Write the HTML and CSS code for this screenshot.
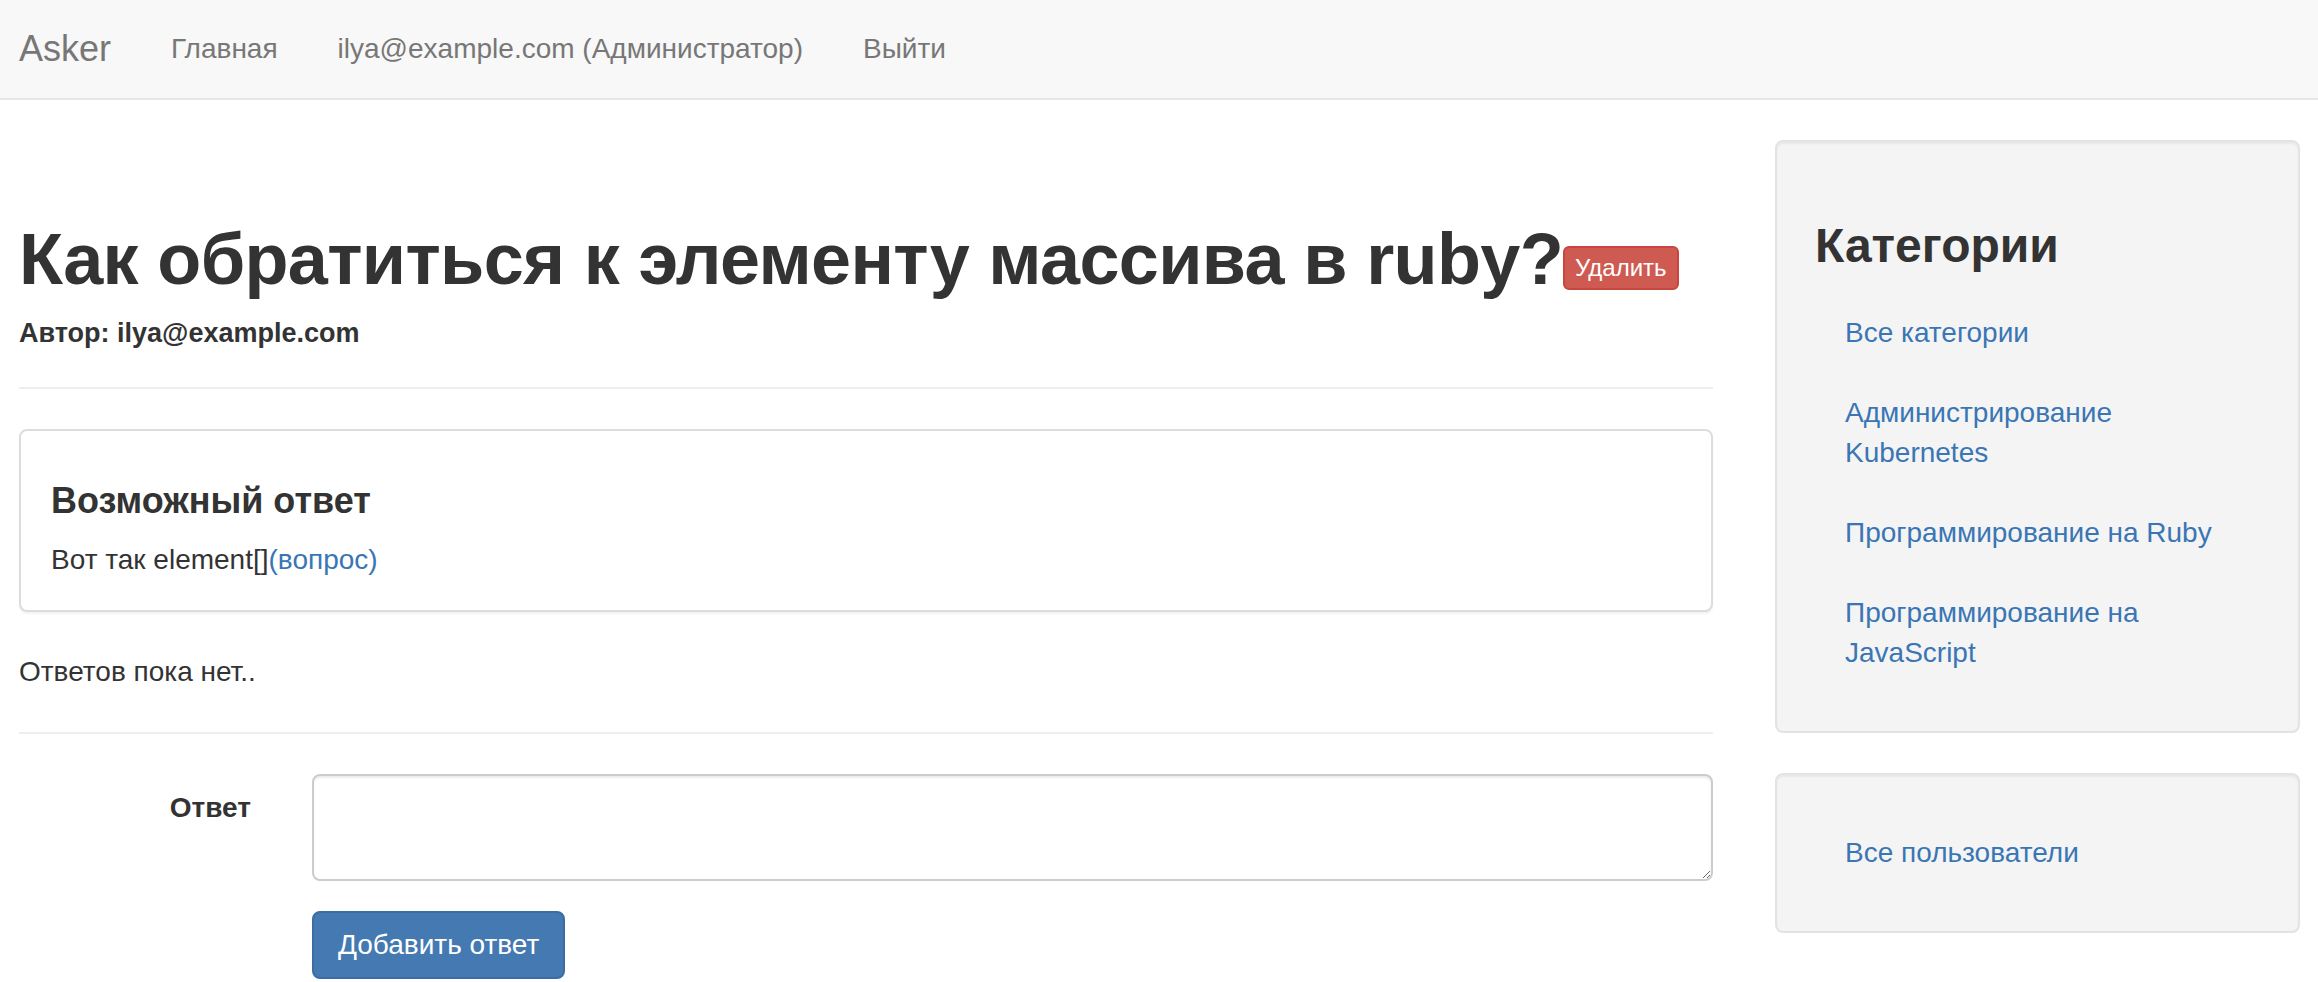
FILE: index.html
```html
<!DOCTYPE html>
<html lang="ru">
<head>
<meta charset="utf-8">
<title>Asker</title>
<link rel="stylesheet" href="styles.css">
</head>
<body>
<nav class="navbar">
  <a class="brand" href="#">Asker</a>
  <ul class="nav-links">
    <li><a href="#">Главная</a></li>
    <li><a href="#">ilya@example.com (Администратор)</a></li>
    <li><a href="#">Выйти</a></li>
  </ul>
</nav>
<div class="page">
  <main class="main">
    <div class="page-header">
      <h1 class="title">Как обратиться к элементу массива в ruby?<a class="btn-delete" href="#">Удалить</a></h1>
      <h5 class="author">Автор: ilya@example.com</h5>
    </div>
    <div class="panel">
      <div class="panel-body">
        <h4 class="panel-title">Возможный ответ</h4>
        <p class="panel-text">Вот так element[]<a href="#">(вопрос)</a></p>
      </div>
    </div>
    <p class="no-answers">Ответов пока нет..</p>
    <hr class="divider">
    <form class="answer-form">
      <label class="form-label" for="answer">Ответ</label>
      <textarea class="form-textarea" id="answer"></textarea>
      <div class="form-actions">
        <button type="button" class="btn-primary">Добавить ответ</button>
      </div>
    </form>
  </main>
  <aside class="sidebar">
    <div class="well">
      <h3 class="well-title">Категории</h3>
      <ul class="nav-stacked">
        <li><a href="#">Все категории</a></li>
        <li><a href="#">Администрирование Kubernetes</a></li>
        <li><a href="#">Программирование на Ruby</a></li>
        <li><a href="#">Программирование на JavaScript</a></li>
      </ul>
    </div>
    <div class="well">
      <ul class="nav-stacked">
        <li><a href="#">Все пользователи</a></li>
      </ul>
    </div>
  </aside>
</div>
</body>
</html>
```

FILE: styles.css
```css
* { box-sizing: border-box; }
html, body { margin: 0; padding: 0; }
body {
  font-family: "Liberation Sans", Helvetica, Arial, sans-serif;
  font-size: 28px;
  line-height: 40px;
  color: #333;
  background: #fff;
}
a { color: #3a76b4; text-decoration: none; }

.navbar {
  display: flex;
  align-items: center;
  height: 100px;
  padding-left: 19px;
  background: #f8f8f8;
  border-bottom: 2px solid #e7e7e7;
}
.brand {
  font-size: 36px;
  line-height: 40px;
  color: #777;
  margin-right: 30px;
}
.nav-links {
  display: flex;
  list-style: none;
  margin: 0;
  padding: 0;
}
.nav-links a {
  display: block;
  padding: 0 30px;
  color: #777;
  font-size: 28px;
  line-height: 40px;
}

.page {
  display: flex;
  gap: 62px;
  padding: 0 18px 0 19px;
  margin-top: 40px;
}
.main { flex: 1; min-width: 0; }
.sidebar { width: 525px; flex-shrink: 0; }

.page-header {
  margin: 80px 0 40px;
  padding-bottom: 18px;
  border-bottom: 2px solid #eee;
}
.title {
  font-size: 72px;
  line-height: 1.1;
  font-weight: 700;
  letter-spacing: -0.65px;
  margin: 0 0 20px;
}
.btn-delete {
  display: inline-block;
  vertical-align: 8px;
  margin-left: 0;
  padding: 2px 10px;
  font-size: 24px;
  line-height: 36px;
  font-weight: 400;
  letter-spacing: 0;
  color: #fff;
  background: #cf5a52;
  border: 2px solid #c9463f;
  border-radius: 6px;
}
.author {
  font-size: 27px;
  line-height: 1.1;
  font-weight: 700;
  margin: 0 0 20px;
}

.panel {
  margin-bottom: 40px;
  background: #fff;
  border: 2px solid #ddd;
  border-radius: 8px;
  box-shadow: 0 2px 2px rgba(0, 0, 0, 0.05);
}
.panel-body { padding: 30px; }
.panel-title {
  font-size: 36px;
  line-height: 1.1;
  font-weight: 700;
  margin: 20px 0 20px;
}
.panel-text { margin: 0; }

.no-answers { margin: 0 0 20px; }
.divider {
  margin: 40px 0;
  border: 0;
  border-top: 2px solid #eee;
}

.answer-form {
  display: grid;
  grid-template-columns: 232px 1fr;
  column-gap: 61px;
}
.form-label {
  text-align: right;
  font-weight: 700;
  padding-top: 14px;
}
.form-textarea {
  display: block;
  width: 100%;
  height: 107px;
  padding: 12px 24px;
  font: inherit;
  color: #555;
  background: #fff;
  border: 2px solid #ccc;
  border-radius: 8px;
  box-shadow: inset 0 2px 2px rgba(0, 0, 0, 0.075);
  resize: vertical;
}
.form-actions {
  grid-column: 2;
  margin-top: 30px;
}
.btn-primary {
  padding: 12px 24px;
  font: inherit;
  color: #fff;
  background: #4479b2;
  border: 2px solid #3b6ca3;
  border-radius: 8px;
  cursor: pointer;
}

.well {
  margin-bottom: 40px;
  padding: 38px;
  background: #f4f4f4;
  border: 2px solid #e3e3e3;
  border-radius: 8px;
  box-shadow: inset 0 2px 2px rgba(0, 0, 0, 0.05);
}
.well-title {
  font-size: 48px;
  line-height: 1.1;
  font-weight: 700;
  margin: 40px 0 20px;
}
.nav-stacked {
  list-style: none;
  margin: 0;
  padding: 0;
}
.nav-stacked a {
  display: block;
  padding: 20px 30px;
}
```
